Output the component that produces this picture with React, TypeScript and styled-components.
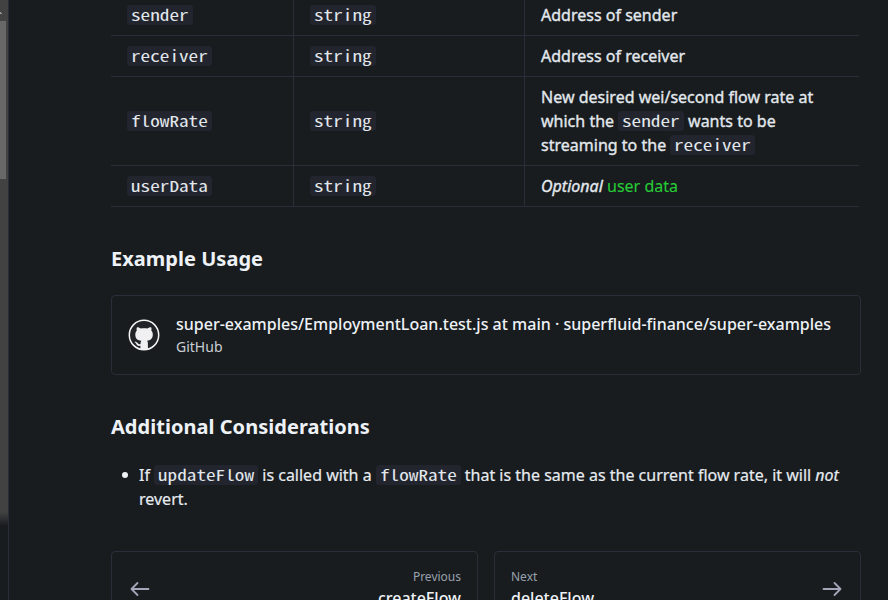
import React from "react";
import styled, { createGlobalStyle } from "styled-components";

const Global = createGlobalStyle`
  * { box-sizing: border-box; }
  body { margin: 0; background: #181c1f; overflow: hidden; }
`;

const Page = styled.div`
  display: flex;
  width: 888px;
  height: 600px;
  overflow: hidden;
  background: #181c1f;
  color: #e3e8ed;
  font: 400 16px/24px "Noto Sans", sans-serif;
`;

const Rail = styled.aside`
  width: 9px;
  flex: none;
  height: 600px;
  border-right: 1px solid #2b2d3a;
  background: linear-gradient(#424242 0, #424242 512px, #181c1f 526px);
`;

const RailMark = styled.svg`
  display: block;
  width: 8px;
  height: 21px;
`;

const RailThumb = styled.div`
  width: 6px;
  height: 158px;
  background: #686868;
`;

const Main = styled.main`
  width: 750px;
  margin-left: 102px;
  flex: none;
`;

const Table = styled.div`
  width: 748px;
  margin-top: -5px;
`;

const Row = styled.div`
  display: grid;
  grid-template-columns: 183px 231px 1fr;
  border-bottom: 1px solid #2b2d38;
`;

const Cell = styled.div<{ $last?: boolean }>`
  display: flex;
  align-items: center;
  padding: 8px 16px;
  border-right: ${(p) => (p.$last ? "0" : "1px solid #2b2d38")};
`;

const TextLine = styled.div`
  white-space: nowrap;
  height: 24px;
  letter-spacing: 0.01px;
  -webkit-text-stroke: 0.35px currentColor;
`;

const CodePill = styled.code<{ $chars: number }>`
  display: inline-block;
  width: ${(p) => p.$chars * 9.6 + 8}px;
  height: 20px;
  margin: 2px 0;
  padding: 0 4px;
  border-radius: 3px;
  background: #22252d;
  color: #e3e8ed;
  vertical-align: top;
  letter-spacing: 0;
`;

const CodeText = styled.span`
  display: block;
  width: max-content;
  font: 400 15px/19px "Noto Sans Mono CJK SC", "Liberation Mono", monospace;
  font-variant-ligatures: none;
  white-space: nowrap;
  -webkit-text-stroke: 0;
  transform: scaleX(1.28);
  transform-origin: 0 0;
`;

function Code({ children }: { children: string }) {
  return (
    <CodePill $chars={children.length}>
      <CodeText>{children}</CodeText>
    </CodePill>
  );
}

const Link = styled.a`
  color: #26cc36;
  -webkit-text-stroke: 0.1px currentColor;
`;

const Heading = styled.h3`
  margin: 38px 0 0;
  font-size: 20px;
  line-height: 28px;
  font-weight: 700;
  letter-spacing: 0.03px;
  color: #eef2f6;
`;

const Card = styled.a`
  display: flex;
  align-items: center;
  height: 80px;
  margin-top: 22px;
  padding: 0 16px;
  gap: 16px;
  border: 1px solid #2b2d38;
  border-radius: 4px;
`;

const Logo = styled.svg`
  width: 32px;
  height: 32px;
  flex: none;
`;

const CardBody = styled.div`
  padding-bottom: 2px;
`;

const CardTitle = styled.div`
  font-weight: 500;
  letter-spacing: 0.005px;
  color: #eef2f6;
  white-space: nowrap;
`;

const CardSource = styled.div`
  font-size: 14px;
  line-height: 21px;
  color: #c9ced4;
`;

const List = styled.ul`
  list-style: none;
  margin: 22px 0 0;
  padding: 0;
`;

const Item = styled.li`
  display: flex;
  color: #e6ebf0;
  white-space: nowrap;
`;

const Bullet = styled.span`
  width: 6px;
  height: 6px;
  margin: 9px 11px 0;
  border-radius: 50%;
  background: #eef2f6;
  flex: none;
`;

const ItemLine = styled.div`
  height: 24px;
  -webkit-text-stroke: 0.2px currentColor;
`;

const Pager = styled.nav`
  display: grid;
  grid-template-columns: 367px 367px;
  gap: 16px;
  margin-top: 40px;
`;

const PagerLink = styled.a<{ $end?: boolean }>`
  display: flex;
  align-items: center;
  justify-content: space-between;
  height: 76px;
  padding: 0 16px;
  border: 1px solid #2b2d38;
  border-radius: 4px;
  text-align: ${(p) => (p.$end ? "right" : "left")};
`;

const PagerLabel = styled.div`
  font-size: 12px;
  line-height: 18px;
  color: #98a1ad;
`;

const PagerTitle = styled.div`
  font-weight: 500;
  color: #eef2f6;
`;

const ArrowIcon = styled.svg`
  width: 24px;
  height: 24px;
  fill: none;
  stroke: #a2a6b8;
  stroke-width: 1.8;
  stroke-linecap: round;
  stroke-linejoin: round;
`;

const fields = [
  { name: "sender", text: <TextLine>Address of sender</TextLine> },
  { name: "receiver", text: <TextLine>Address of receiver</TextLine> },
  {
    name: "flowRate",
    text: (
      <div>
        <TextLine>New desired wei/second flow rate at</TextLine>
        <TextLine>which the <Code>sender</Code> wants to be</TextLine>
        <TextLine>streaming to the <Code>receiver</Code></TextLine>
      </div>
    ),
  },
  { name: "userData", text: <TextLine><em>Optional</em> <Link>user data</Link></TextLine> },
];

export default function App() {
  return (
    <Page>
      <Global />
      <Rail>
        <RailMark viewBox="0 0 8 21"><path d="M0 12h1v1h1v1H0z" fill="#999" /></RailMark>
        <RailThumb />
      </Rail>
      <Main>
        <Table>
          {fields.map((f) => (
            <Row key={f.name}>
              <Cell><Code>{f.name}</Code></Cell>
              <Cell><Code>string</Code></Cell>
              <Cell $last>{f.text}</Cell>
            </Row>
          ))}
        </Table>
        <Heading>Example Usage</Heading>
        <Card>
          <Logo viewBox="0 0 32 32">
            <circle cx="16" cy="16" r="14.7" fill="#202428" stroke="#f4f4f4" strokeWidth="1.5" />
            <path
              fill="#f0eff1"
              d="M9 8.2C10.3 8 11.8 8.8 12.7 9.5C14.8 9 17.4 9 19.4 9.5C20.4 8.8 21.8 8 23.1 8.2C23.7 9.4 23.6 10.7 23.3 11.5C24.4 12.7 24.9 14.1 24.8 16C24.6 19.8 22.4 21.3 19 21.8C19.7 22.5 19.9 23.3 19.9 24.4V30.2Q16 31.2 12.4 30.2V26.8C9.5 27.3 8.8 25.9 8.2 24.8C7.8 24 7.1 23.4 6.5 22.9C7.7 22.4 8.8 23 9.6 24.1C10.4 25.2 11.1 25.4 12.5 25C12.5 23.7 12.7 22.6 13.3 21.8C9.6 21.4 7.5 19.8 7.3 16C7.2 14.1 7.8 12.7 8.8 11.5C8.5 10.7 8.4 9.4 9 8.2Z"
            />
          </Logo>
          <CardBody>
            <CardTitle>super-examples/EmploymentLoan.test.js at main · superfluid-finance/super-examples</CardTitle>
            <CardSource>GitHub</CardSource>
          </CardBody>
        </Card>
        <Heading>Additional Considerations</Heading>
        <List>
          <Item>
            <Bullet />
            <div>
              <ItemLine>
                If <Code>updateFlow</Code> is called with a <Code>flowRate</Code> that is the same as the current flow rate, it will <em>not</em>
              </ItemLine>
              <ItemLine>revert.</ItemLine>
            </div>
          </Item>
        </List>
        <Pager>
          <PagerLink $end>
            <ArrowIcon viewBox="0 0 24 24"><path d="M20.5 12H3.5M9.5 6L3.5 12L9.5 18" /></ArrowIcon>
            <div>
              <PagerLabel>Previous</PagerLabel>
              <PagerTitle>createFlow</PagerTitle>
            </div>
          </PagerLink>
          <PagerLink>
            <div>
              <PagerLabel>Next</PagerLabel>
              <PagerTitle>deleteFlow</PagerTitle>
            </div>
            <ArrowIcon viewBox="0 0 24 24"><path d="M3.5 12H20.5M14.5 6L20.5 12L14.5 18" /></ArrowIcon>
          </PagerLink>
        </Pager>
      </Main>
    </Page>
  );
}
